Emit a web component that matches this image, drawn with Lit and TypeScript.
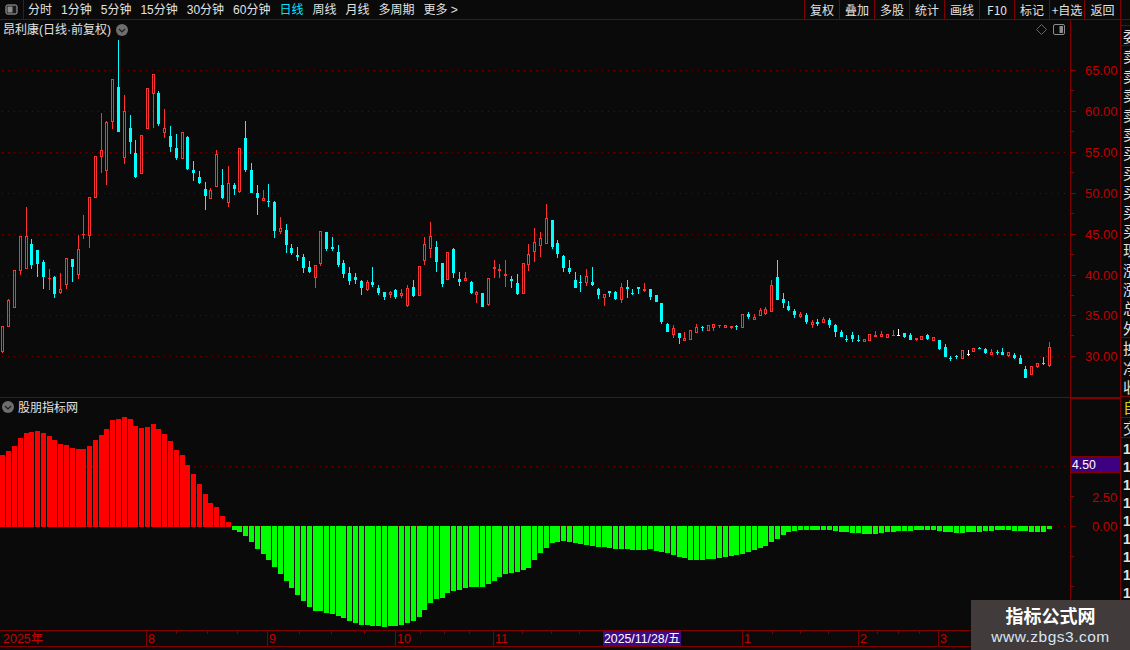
import { LitElement, html, css, svg } from "lit";
import { customElement } from "lit/decorators.js";

const CANDLES =
  "U 326 326 352 353;U 299 300 327 327;U 270 270 308 308;U 236 236 271 275;U 207 236 269 269;D 239 244 265 269;D 250 250 264 277;D 260 262 277 289;U 269 278 279 290;D 276 277 294 298;U 273 289 293 294;U 258 258 285 289;D 259 259 267 282;U 235 249 275 279;U 215 234 235 239;U 197 197 236 248;" +
  "U 156 156 198 198;U 113 150 157 173;U 121 122 171 185;U 79 79 122 129;D 40 87 132 132;U 95 111 158 164;D 115 128 142 154;D 140 153 177 178;U 135 135 174 174;U 88 88 129 129;U 74 74 94 128;D 91 93 124 126;U 109 128 133 138;D 126 136 147 152;D 134 148 158 160;U 132 132 159 159;D 136 137 169 170;D 161 170 173 181;D 171 177 183 184;D 182 189 196 210;U 188 190 199 199;U 150 154 187 187;D 169 185 198 199;U 166 183 203 207;D 183 185 189 195;U 148 148 192 193;D 121 138 170 172;D 163 170 193 193;D 185 193 198 215;U 190 198 201 201;D 184 201 202 207;" +
  "D 201 202 231 238;U 217 228 232 234;D 224 230 245 253;D 244 248 253 255;D 247 255 257 261;D 254 257 268 273;D 261 267 272 273;U 265 265 278 288;U 231 231 264 266;D 232 232 249 251;D 237 247 249 251;D 245 252 265 267;D 260 263 274 278;D 267 273 281 285;D 273 277 280 284;D 280 281 288 295;U 280 282 290 291;D 267 282 285 287;D 285 288 293 295;D 292 292 297 300;U 291 292 295 298;D 289 290 297 299;U 289 293 296 298;U 285 288 306 307;D 280 287 296 297;U 266 266 296 296;U 237 244 261 265;U 222 236 249 258;D 241 247 262 272;D 263 263 284 287;U 252 252 280 280;D 248 249 273 278;D 272 279 282 286;U 272 278 281 281;D 281 282 293 294;U 291 292 295 303;D 293 293 307 307;U 278 278 305 306;U 260 267 269 278;U 264 269 271 278;U 260 274 276 287;D 276 279 281 288;D 274 283 294 295;U 263 263 294 294;U 244 254 265 271;U 228 242 252 262;" +
  "U 232 238 246 257;U 204 218 244 244;D 220 220 247 249;D 240 243 254 258;D 255 256 268 272;D 260 268 272 274;D 272 280 288 288;D 275 282 283 292;U 269 276 283 286;D 267 282 285 286;D 288 289 295 299;U 294 294 298 306;D 291 291 293 297;D 291 292 299 300;U 283 287 300 303;D 280 287 289 298;D 289 293 294 295;D 287 287 289 294;U 283 289 291 292;D 289 289 297 300;D 295 295 302 302;D 303 303 322 324;D 323 324 332 332;U 325 328 335 338;D 333 333 338 344;U 332 338 341 341;U 330 330 340 340;U 324 327 333 333;D 326 327 328 331;U 325 325 331 331;U 324 324 328 331;U 325 325 326 328;U 325 325 328 328;U 326 326 328 329;D 325 326 327 330;U 314 314 328 328;D 312 314 317 319;U 314 317 320 320;U 308 310 316 316;U 307 309 314 315;U 280 285 312 312;D 260 277 300 300;D 293 299 303 308;D 301 306 310 311;D 309 311 315 318;" +
  "U 312 314 317 318;D 313 315 322 324;U 320 322 325 328;D 319 322 324 326;U 317 319 323 323;D 318 320 325 328;D 324 325 332 337;D 330 332 337 337;D 335 339 340 342;D 332 335 339 342;D 335 340 341 342;U 339 339 342 342;U 334 334 341 341;U 331 335 337 337;U 331 334 337 337;U 334 334 338 338;U 330 335 336 336;W 329 335 336 336;D 333 333 337 338;D 333 335 340 340;U 338 338 340 341;U 336 336 340 340;D 334 335 339 340;U 337 337 341 341;D 340 340 349 350;D 344 347 357 357;D 356 358 359 361;D 355 356 357 359;U 350 350 359 359;W 350 354 355 356;U 348 348 352 352;D 347 348 349 349;D 348 349 353 354;U 349 352 355 355;D 350 352 353 355;D 348 352 355 355;U 352 352 356 357;D 353 355 358 359;D 355 358 364 364;D 366 369 378 378;U 366 366 375 375;U 363 363 367 368;D 357 363 364 365;U 342 347 366 367";

const RED_TOPS = [455,451,446,438,433,432,431,433,436,440,444,445,448,449,449,446,440,435,429,420,419,417,419,426,428,427,424,429,434,441,450,455,465,474,484,494,503,507,516,522];
const GREEN_BOTTOMS = [530,532,536,542,549,554,560,567,574,581,588,595,601,607,611,611,613,614,616,618,621,623,625,625,626,626,627,626,626,625,623,621,617,610,603,599,598,593,591,590,588,587,587,587,584,581,577,574,573,572];
const GREEN_ANCHORS: [number, number][] = [[521,571],[527,569],[533,561],[540,553],[550,544],[560,541],[570,542],[580,544],[590,546],[600,547],[610,548],[620,549],[640,550],[650,549],[660,552],[670,554],[680,557],[690,560],[700,560],[710,559],[720,558],[730,556],[740,554],[750,552],[760,548],[770,543],[780,537],[790,531],[800,530],[830,530],[850,533],[870,534],[900,531],[930,530],[960,533],[1000,530],[1020,531],[1040,532],[1044,532],[1049,529]];

const left = (i: number) => Math.floor(0.9 + 5.78 * i);

function greenBottom(i: number): number {
  if (i >= 40 && i < 40 + GREEN_BOTTOMS.length) return GREEN_BOTTOMS[i - 40];
  const x = left(i) + 2;
  for (let k = 1; k < GREEN_ANCHORS.length; k++) {
    const [x0, y0] = GREEN_ANCHORS[k - 1];
    const [x1, y1] = GREEN_ANCHORS[k];
    if (x <= x1) return Math.round(y0 + ((y1 - y0) * (x - x0)) / (x1 - x0));
  }
  return 529;
}

const candleMarks = CANDLES.split(";").map((row, i) => {
  const [t, a, b, c, d] = row.split(" ");
  const wt = +a, bt = +b, bb = +c, wb = +d;
  const x = left(i);
  const colour = t === "U" ? "#ff3232" : t === "W" ? "#ffffff" : "#00ffff";
  const wicks = svg`
    ${bt > wt ? svg`<rect x=${x + 2} y=${wt} width="1" height=${bt - wt} fill=${colour}></rect>` : ""}
    ${wb > bb ? svg`<rect x=${x + 2} y=${bb} width="1" height=${wb - bb} fill=${colour}></rect>` : ""}`;
  if (t === "U" && bb - bt > 2) {
    return svg`${wicks}<rect x=${x + 1.5} y=${bt + 0.5} width="2" height=${bb - bt - 1} fill="none" stroke=${colour}></rect>`;
  }
  return svg`${wicks}<rect x=${x + 1} y=${bt} width="3" height=${bb - bt} fill=${colour}></rect>`;
});

const barMarks = Array.from({ length: 182 }, (_, i) => {
  const x = left(i);
  if (i < RED_TOPS.length) return svg`<rect x=${x} y=${RED_TOPS[i]} width="5" height=${527 - RED_TOPS[i]} fill="#ff0000"></rect>`;
  const b = greenBottom(i);
  return svg`<rect x=${x} y="526" width="5" height=${b - 526} fill="#00ff00"></rect>`;
});

const PRICES: [string, number][] = [["65.00",70],["60.00",111],["55.00",152],["50.00",193],["45.00",234],["40.00",275],["35.00",315],["30.00",356]];

const dotted = (y: number) => svg`<line x1="2" x2="1068" y1=${y + 0.5} y2=${y + 0.5} stroke="#6e0000" stroke-width="1" stroke-dasharray="1 5"></line>`;
const tick = (y: number, len: number) => svg`<rect x="1071" y=${y} width=${len} height="1" fill="#8a0000"></rect>`;

const AXIS_MAJOR: [number, string][] = [[146,"8"],[267,"9"],[395,"10"],[493,"11"],[742,"1"],[858,"2"],[938,"3"]];
const AXIS_MINOR = [176,207,237,299,331,364,420,444,469,522,551,579,772,800,828,877,898,919];
const TAB_LINES = [42,73,115,145,178,209,241,282,309,335,365,390,422,480,510,536,568,600,629,661,696,736,767,808,839,872];

const UPPER_SIDE = ["卖","卖","卖","卖","卖","买","买","买","买","买","现","涨","涨","总","外"];
const LOWER_SIDE = ["1","1","1","1","1","1","1","1","1","1"];

@customElement("app-root")
export class AppRoot extends LitElement {
  static styles = css`
    :host { display: block; width: 1130px; height: 650px; }
    * { box-sizing: border-box; }
    .root {
      position: relative; width: 1130px; height: 650px; overflow: hidden;
      background: #0a0a0a; color: #e2e2e2; display: flex; flex-direction: column;
      font-family: "Noto Sans CJK SC", "Liberation Sans", sans-serif; font-size: 12px;
    }
    .toolbar { flex: 0 0 20px; display: flex; border-bottom: 1px solid #800000; line-height: 19px; }
    .home { flex: 0 0 24px; border-right: 1px solid #800000; display: flex; align-items: center; justify-content: center; }
    .periods { flex: 1; display: flex; gap: 9px; padding: 1px 0 0 4px; line-height: 18px; font-family: "Liberation Sans", "Noto Sans CJK SC", sans-serif; }
    .periods .on { color: #00e5ff; }
    .tools { display: flex; margin-right: 9px; }
    .tools span { width: 35px; text-align: center; border-left: 1px solid #800000; }
    .tools span:last-child { width: 37px; border-right: 1px solid #800000; }
    .body { flex: 1; display: flex; min-height: 0; }
    .charts { flex: 0 0 1121px; display: flex; flex-direction: column; border-right: 1px solid #800000; }
    .panel { position: relative; display: block; }
    .panel svg { display: block; }
    .price { height: 378px; }
    .sub { height: 232px; }
    .title { position: absolute; left: 3px; top: 1px; display: flex; align-items: center; gap: 5px; line-height: 18px; font-family: "Liberation Sans", "Noto Sans CJK SC", sans-serif; }
    .subtitle { position: absolute; left: 2px; top: 0; display: flex; align-items: center; gap: 4px; line-height: 18px; }
    .marks { position: absolute; left: 1036px; top: 4px; display: flex; align-items: center; gap: 6px; }
    .axis { position: relative; height: 16px; border-top: 1px solid #800000; border-bottom: 1px solid #800000; flex: 0 0 17px; }
    .axis svg { display: block; }
    .tabs { flex: 1; display: block; overflow: hidden; }
    .ylab { fill: #c00000; font-family: "Liberation Sans", sans-serif; font-size: 13px; }
    .xlab { fill: #c80000; font-family: "Liberation Sans", "Noto Sans CJK SC", sans-serif; font-size: 12.5px; }
    .date { fill: #ffffff; font-family: "Liberation Sans", "Noto Sans CJK SC", sans-serif; font-size: 12.3px; }
    .side { flex: 1; overflow: hidden; display: flex; flex-direction: column; padding-top: 5px; padding-left: 2px; }
    .row { width: 30px; height: 19.4px; line-height: 19.4px; font-size: 15px; white-space: nowrap; flex: 0 0 auto; margin-left: 0; }
    .rule { border-top: 1px solid #800000; margin-left: -2px; flex: 0 0 auto; }
    .yellow { color: #d8d800; }
    .num { height: 18px; line-height: 18px; font-family: "Liberation Sans", sans-serif; font-size: 14px; font-weight: 700; flex: 0 0 auto; }
    .gap { height: 2px; flex: 0 0 auto; }
    .mark {
      position: absolute; right: 0; bottom: 0; width: 159px; height: 50px; background: #413b3b;
      display: flex; flex-direction: column; align-items: center; justify-content: center;
    }
    .mark b { color: #ffffff; font-size: 18px; line-height: 24px; font-weight: 700; }
    .mark i { color: #d6e6f6; font-style: normal; font-family: "Liberation Sans", sans-serif; font-size: 15.5px; line-height: 20px; letter-spacing: .5px; }
  `;

  private chevron(size = 12) {
    return html`<svg width=${size} height=${size} viewBox="0 0 12 12">
      <circle cx="6" cy="6" r="6" fill="#6e6e6e"></circle>
      <path d="M3 5 6 8 9 5" fill="none" stroke="#1c1c1c" stroke-width="1.2"></path>
    </svg>`;
  }

  render() {
    return html`<div class="root">
      <div class="toolbar">
        <div class="home">
          <svg width="13" height="11" viewBox="0 0 13 11">
            <rect x="1" y="1" width="11" height="9" rx="1.5" fill="#1a1a1a" stroke="#b0b0b0"></rect>
            <rect x="2.5" y="2.5" width="5" height="6" fill="#8c8c8c"></rect>
          </svg>
        </div>
        <div class="periods">
          <span>分时</span><span>1分钟</span><span>5分钟</span><span>15分钟</span><span>30分钟</span><span>60分钟</span>
          <span class="on">日线</span><span>周线</span><span>月线</span><span>多周期</span><span>更多 &gt;</span>
        </div>
        <div class="tools">
          <span>复权</span><span>叠加</span><span>多股</span><span>统计</span><span>画线</span><span>F10</span><span>标记</span><span>+自选</span><span>返回</span>
        </div>
      </div>
      <div class="body">
        <div class="charts">
          <div class="panel price">
            <svg width="1120" height="378" viewBox="0 20 1120 378" shape-rendering="crispEdges">
              ${PRICES.map(([, y]) => dotted(y))}
              ${candleMarks}
              <rect x="1070" y="20" width="1" height="378" fill="#800000"></rect>
              <rect x="0" y="397" width="1120" height="1" fill="#800000"></rect>
              ${PRICES.map(([t, y], i) => svg`
                ${tick(y, 5)}
                ${i < 7 ? tick(y + 20, 3) : ""}
                <text class="ylab" x="1085" y=${y + 5}>${t}</text>`)}
            </svg>
            <div class="title"><span>昂利康(日线·前复权)</span>${this.chevron()}</div>
            <div class="marks">
              <svg width="11" height="11" viewBox="0 0 11 11"><path d="M5.5.5 10.5 5.5 5.5 10.5.5 5.5Z" fill="none" stroke="#666"></path></svg>
              <svg width="13" height="11" viewBox="0 0 13 11">
                <rect x=".5" y=".5" width="11" height="10" rx="1.5" fill="none" stroke="#8c8c8c"></rect>
                <rect x="6.5" y="2" width="3.5" height="7" fill="#8c8c8c"></rect>
              </svg>
            </div>
          </div>
          <div class="panel sub">
            <svg width="1120" height="232" viewBox="0 398 1120 232" shape-rendering="crispEdges">
              ${dotted(466)}
              ${dotted(526)}
              ${barMarks}
              <rect x="1070" y="398" width="1" height="232" fill="#800000"></rect>
              <rect x="1071" y="398" width="49" height="1" fill="#800000"></rect>
              ${tick(496, 3)}
              ${tick(526, 5)}
              ${tick(556, 3)}
              ${tick(586, 3)}
              <rect x="1071" y="456" width="49" height="17" fill="#800000"></rect>
              <rect x="1072" y="457" width="48" height="15" fill="#3c0080"></rect>
              <text class="date" x="1072" y="469">4.50</text>
              <text class="ylab" x="1092" y="502">2.50</text>
              <text class="ylab" x="1092" y="531">0.00</text>
            </svg>
            <div class="subtitle">${this.chevron()}<span>股朋指标网</span></div>
          </div>
          <div class="axis">
            <svg width="1120" height="15" viewBox="0 631 1120 15" shape-rendering="crispEdges">
              <text class="xlab" x="3" y="643">2025年</text>
              ${AXIS_MAJOR.map(([x, t]) => svg`
                <rect x=${x} y="631" width="1" height="15" fill="#800000"></rect>
                <text class="xlab" x=${x + 2} y="643">${t}</text>`)}
              ${AXIS_MINOR.map((x) => svg`<rect x=${x} y="631" width="1" height="3" fill="#800000"></rect>`)}
              <rect x="603" y="631" width="78" height="15" fill="#3c0a86"></rect>
              <text class="date" x="604" y="643">2025/11/28/五</text>
            </svg>
          </div>
          <div class="tabs">
            <svg width="1120" height="4" viewBox="0 646 1120 4" shape-rendering="crispEdges">
              ${TAB_LINES.map((x) => svg`<rect x=${x} y="646" width="1" height="4" fill="#800000"></rect>`)}
              <rect x="8" y="648" width="16" height="2" fill="#d8d8d8"></rect>
              <rect x="50" y="648" width="3" height="2" fill="#d8d8d8"></rect>
              <rect x="827" y="648" width="3" height="2" fill="#d8d8d8"></rect>
              <rect x="845" y="648" width="20" height="2" fill="#40e0e0"></rect>
            </svg>
          </div>
        </div>
        <div class="side">
          <div class="rule"></div>
          <div class="row">委比</div>
          <div class="rule"></div>
          ${UPPER_SIDE.map((c) => html`<div class="row">${c}</div>`)}
          <div class="rule"></div>
          <div class="row">换手</div>
          <div class="row">净资</div>
          <div class="row">收益</div>
          <div class="rule"></div>
          <div class="row yellow">自选</div>
          <div class="rule"></div>
          <div class="row">交易</div>
          <div class="rule"></div>
          <div class="gap"></div>
          ${LOWER_SIDE.map((c) => html`<div class="num">${c}</div>`)}
        </div>
      </div>
      <div class="mark"><b>指标公式网</b><i>www.zbgs3.com</i></div>
    </div>`;
  }
}
